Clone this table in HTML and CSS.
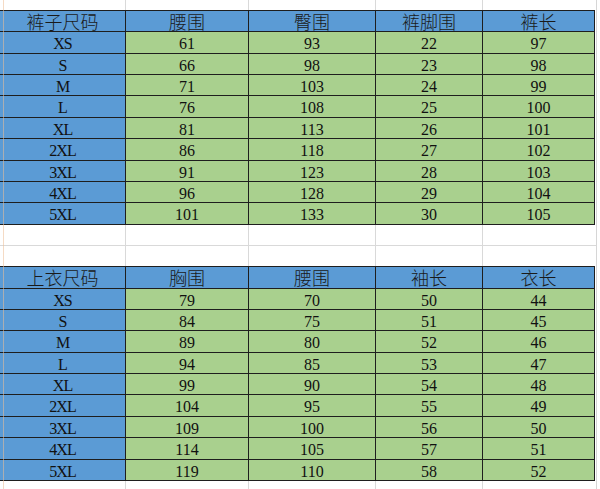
FILE: index.html
```html
<!DOCTYPE html>
<html lang="zh-CN">
<head>
<meta charset="utf-8">
<title>尺码表</title>
<link rel="stylesheet" href="styles.css">
</head>
<body>
<div class="sheet">
  <div class="strip strip-top"><i></i><i></i><i></i><i></i><i></i></div>

  <div class="table">
    <div class="hd">裤子尺码</div><div class="hd">腰围</div><div class="hd">臀围</div><div class="hd">裤脚围</div><div class="hd">裤长</div>
    <div class="sz">XS</div><div class="v">61</div><div class="v">93</div><div class="v">22</div><div class="v">97</div>
    <div class="sz">S</div><div class="v">66</div><div class="v">98</div><div class="v">23</div><div class="v">98</div>
    <div class="sz">M</div><div class="v">71</div><div class="v">103</div><div class="v">24</div><div class="v">99</div>
    <div class="sz">L</div><div class="v">76</div><div class="v">108</div><div class="v">25</div><div class="v">100</div>
    <div class="sz">XL</div><div class="v">81</div><div class="v">113</div><div class="v">26</div><div class="v">101</div>
    <div class="sz">2XL</div><div class="v">86</div><div class="v">118</div><div class="v">27</div><div class="v">102</div>
    <div class="sz">3XL</div><div class="v">91</div><div class="v">123</div><div class="v">28</div><div class="v">103</div>
    <div class="sz">4XL</div><div class="v">96</div><div class="v">128</div><div class="v">29</div><div class="v">104</div>
    <div class="sz">5XL</div><div class="v">101</div><div class="v">133</div><div class="v">30</div><div class="v">105</div>
  </div>

  <div class="strip strip-blank">
    <i></i><i></i><i></i><i></i><i></i>
    <i></i><i></i><i></i><i></i><i></i>
  </div>

  <div class="table">
    <div class="hd">上衣尺码</div><div class="hd">胸围</div><div class="hd">腰围</div><div class="hd">袖长</div><div class="hd">衣长</div>
    <div class="sz">XS</div><div class="v">79</div><div class="v">70</div><div class="v">50</div><div class="v">44</div>
    <div class="sz">S</div><div class="v">84</div><div class="v">75</div><div class="v">51</div><div class="v">45</div>
    <div class="sz">M</div><div class="v">89</div><div class="v">80</div><div class="v">52</div><div class="v">46</div>
    <div class="sz">L</div><div class="v">94</div><div class="v">85</div><div class="v">53</div><div class="v">47</div>
    <div class="sz">XL</div><div class="v">99</div><div class="v">90</div><div class="v">54</div><div class="v">48</div>
    <div class="sz">2XL</div><div class="v">104</div><div class="v">95</div><div class="v">55</div><div class="v">49</div>
    <div class="sz">3XL</div><div class="v">109</div><div class="v">100</div><div class="v">56</div><div class="v">50</div>
    <div class="sz">4XL</div><div class="v">114</div><div class="v">105</div><div class="v">57</div><div class="v">51</div>
    <div class="sz">5XL</div><div class="v">119</div><div class="v">110</div><div class="v">58</div><div class="v">52</div>
  </div>

  <div class="strip strip-bottom"><i></i><i></i><i></i><i></i><i></i></div>
</div>
</body>
</html>
```

FILE: styles.css
```css
html, body {
  margin: 0;
  padding: 0;
  background: #ffffff;
}

.sheet {
  position: relative;
  width: 600px;
  height: 489px;
  overflow: hidden;
  background:
    linear-gradient(to right, transparent 596px, #d6d6d6 596px, #d6d6d6 597px, transparent 597px),
    #ffffff;
  font-family: "Liberation Serif", "Noto Sans CJK SC", serif;
  color: #111111;
}

/* faint spreadsheet row-header edge */
.sheet::before {
  content: "";
  position: absolute;
  left: 3px;
  top: 0;
  bottom: 0;
  width: 1px;
  background: rgba(236, 190, 150, 0.55);
  pointer-events: none;
  z-index: 2;
}

.strip {
  display: grid;
  grid-template-columns: 125px 122px 126px 106px 113px;
  column-gap: 1px;
  row-gap: 1px;
  width: 596px;
  background: #d9d9d9;
}

.strip i {
  display: block;
  background: #ffffff;
}

.strip-top {
  height: 10px;
}

.strip-blank {
  grid-template-rows: 20.36px 20.36px;
}

.strip-bottom {
  height: 20px;
}

.table {
  display: grid;
  grid-template-columns: 125px 122px 126px 106px 111px;
  grid-template-rows: repeat(10, 20.36px);
  gap: 1px;
  padding: 1px 1px 1px 0;
  width: 595px;
  box-sizing: border-box;
  background: #1e1e1e;
}

.hd,
.sz,
.v {
  text-align: center;
  white-space: nowrap;
  box-sizing: border-box;
}

.hd {
  background: #5b9bd5;
  font-family: "Noto Sans CJK SC", "Liberation Serif", sans-serif;
  font-weight: 300;
  font-size: 18px;
  line-height: 19px;
  padding-top: 1px;
  color: #1a1a1a;
}

.sz {
  background: #5b9bd5;
  font-size: 16px;
  line-height: 16px;
  padding-top: 4px;
  letter-spacing: -1px;
}

.v {
  background: #a9d08e;
  font-size: 16px;
  line-height: 16px;
  padding-top: 4px;
}
```
